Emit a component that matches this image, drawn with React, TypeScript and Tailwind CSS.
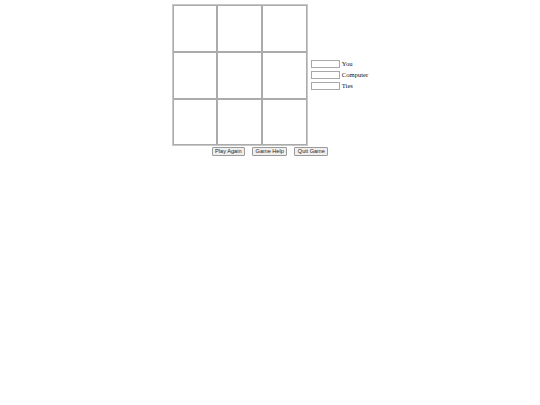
import React from "react";

const cells = [0, 1, 2, 3, 4, 5, 6, 7, 8];

export default function App() {
  return (
    <div className="w-[540px] h-[405px] bg-white pt-[4px]" style={{ fontFamily: '"Liberation Serif", serif' }}>
      <div className="flex justify-center items-center gap-[3px]">
        <div className="border border-[#c8c8c8] grid grid-cols-[44px_45px_45px] grid-rows-[47px_47px_46px]">
          {cells.map((c) => (
            <div key={c} className="border border-[#ababab] bg-white" />
          ))}
        </div>
        <div className="flex flex-col gap-[3px]">
          {["You", "Computer", "Ties"].map((l) => (
            <div key={l} className="flex items-center gap-[2px] h-[8px]">
              <div className="w-[29px] h-[8px] border border-[#a8a8a8] bg-white" />
              <span className="text-[6.6px] leading-[8px] text-[#111]">{l}</span>
            </div>
          ))}
        </div>
      </div>
      <div className="flex justify-center gap-[7px] mt-[1px]">
        {["Play Again", "Game Help", "Quit Game"].map((b) => (
          <button
            key={b}
            className="h-[9px] px-[2.5px] border border-[#9a9a9a] bg-[#efefef] rounded-[1px] text-[5.6px] leading-[7px] text-[#222]"
            style={{ fontFamily: '"Liberation Sans", Arial, sans-serif' }}
          >
            {b}
          </button>
        ))}
      </div>
    </div>
  );
}
